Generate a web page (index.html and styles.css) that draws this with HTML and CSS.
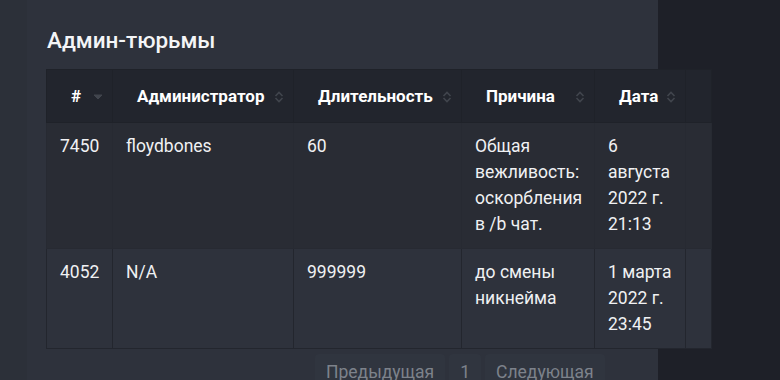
FILE: index.html
```html
<!DOCTYPE html>
<html lang="ru">
<head>
    <meta charset="UTF-8">
    <meta name="viewport" content="width=device-width, initial-scale=1.0">
    <title>Админ-тюрьмы</title>
    <link rel="stylesheet" href="styles.css">
</head>
<body>
    <div class="page">
        <div class="panel">
            <h2 class="title">Админ-тюрьмы</h2>

            <table class="jails">
                <colgroup>
                    <col class="c-id">
                    <col class="c-admin">
                    <col class="c-length">
                    <col class="c-reason">
                    <col class="c-date">
                    <col class="c-pad">
                </colgroup>
                <thead>
                    <tr>
                        <th>#
                            <svg class="sort" width="10" height="12" viewBox="0 0 10 12"><path d="M1 4h8l-4 4z"/></svg>
                        </th>
                        <th>Администратор
                            <svg class="sort" width="10" height="12" viewBox="0 0 10 12"><path d="M1.5 5L5 1.5 8.5 5M1.5 7L5 10.5 8.5 7" fill="none" stroke-width="1.6"/></svg>
                        </th>
                        <th>Длительность
                            <svg class="sort" width="10" height="12" viewBox="0 0 10 12"><path d="M1.5 5L5 1.5 8.5 5M1.5 7L5 10.5 8.5 7" fill="none" stroke-width="1.6"/></svg>
                        </th>
                        <th>Причина
                            <svg class="sort" width="10" height="12" viewBox="0 0 10 12"><path d="M1.5 5L5 1.5 8.5 5M1.5 7L5 10.5 8.5 7" fill="none" stroke-width="1.6"/></svg>
                        </th>
                        <th>Дата
                            <svg class="sort" width="10" height="12" viewBox="0 0 10 12"><path d="M1.5 5L5 1.5 8.5 5M1.5 7L5 10.5 8.5 7" fill="none" stroke-width="1.6"/></svg>
                        </th>
                        <th></th>
                    </tr>
                </thead>
                <tbody>
                    <tr class="odd">
                        <td>7450</td>
                        <td>floydbones</td>
                        <td>60</td>
                        <td>Общая вежливость: оскорбления в /b чат.</td>
                        <td>6 августа 2022 г. 21:13</td>
                        <td></td>
                    </tr>
                    <tr class="even">
                        <td>4052</td>
                        <td>N/A</td>
                        <td>999999</td>
                        <td>до смены никнейма</td>
                        <td>1 марта 2022 г. 23:45</td>
                        <td></td>
                    </tr>
                </tbody>
            </table>

            <div class="pager">
                <button class="page-btn">Предыдущая</button>
                <button class="page-btn">1</button>
                <button class="page-btn">Следующая</button>
            </div>
        </div>
    </div>
</body>
</html>
```

FILE: styles.css
```css
* {
    box-sizing: border-box;
    font-family: Roboto, "Noto Sans", "Liberation Sans", sans-serif;
}

body {
    margin: 0;
    background: #1e2028;
    color: #f2f3f5;
    overflow: hidden;
}

.page {
    width: 658px;
    height: 380px;
    background: #2c3039;
    padding-left: 27px;
}

.panel {
    height: 100%;
    background: #2e323c;
    padding: 26px 0 0 19px;
}

.title {
    margin: 0 0 15px 1px;
    font-size: 22.5px;
    font-weight: 500;
    line-height: 28px;
    color: #f4f5f7;
}

.jails {
    border-collapse: collapse;
    table-layout: fixed;
    width: 665px;
    font-size: 17.5px;
}

.c-id { width: 66px; }
.c-admin { width: 181px; }
.c-length { width: 168px; }
.c-reason { width: 133px; }
.c-date { width: 91px; }
.c-pad { width: 26px; }

.jails th {
    position: relative;
    height: 53px;
    padding: 0 20px 0 24px;
    background: #22252d;
    border: 1px solid #1f2229;
    text-align: left;
    font-size: 17px;
    font-weight: 700;
    color: #ffffff;
    white-space: nowrap;
}

.sort {
    position: absolute;
    right: 9px;
    top: 21px;
    fill: #41454d;
    stroke: #41454d;
}

.jails td {
    padding: 10px 6px 11px 13px;
    vertical-align: top;
    line-height: 26px;
    border: 1px solid #23262e;
    color: #f0f1f3;
}

.odd td {
    background: #292c34;
    border-color: #272a32;
}

.even td {
    background: #2e323c;
}

.pager {
    display: flex;
    gap: 4px;
    padding: 5px 0 0 269px;
}

.page-btn {
    height: 32px;
    padding: 4px 11px 0;
    border: none;
    border-radius: 4px;
    background: #30353f;
    color: #7d828b;
    font-size: 17.5px;
    text-align: left;
}
```
